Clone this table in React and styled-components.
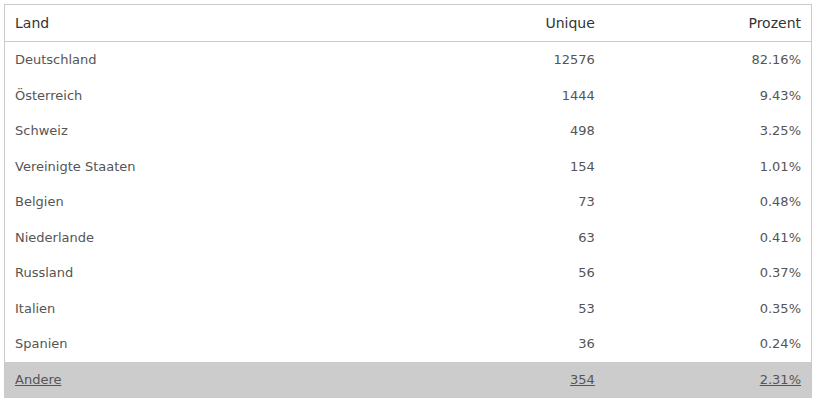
import React from "react";
import styled, { createGlobalStyle } from "styled-components";

const Global = createGlobalStyle`
  html, body { margin: 0; padding: 0; background: #fff; }
  body { padding: 4px; font-family: "DejaVu Sans", sans-serif; }
`;

const Table = styled.table`
  width: 808px;
  border-collapse: collapse;
  border: 1px solid #cacaca;
  table-layout: fixed;
`;

const Th = styled.th`
  font-weight: normal;
  font-size: 14px;
  color: #333;
  height: 36px;
  padding: 0 10px;
  text-align: ${(p) => (p.$right ? "right" : "left")};
  border-bottom: 1px solid #cacaca;
  width: ${(p) => p.$w};
`;

const Row = styled.tr`
  background: ${(p) => (p.$other ? "#cccccc" : "#fff")};
`;

const Td = styled.td`
  font-size: 13px;
  color: #555;
  height: 35.5px;
  padding: 0 10px;
  text-align: ${(p) => (p.$right ? "right" : "left")};
  text-decoration: ${(p) => (p.$u ? "underline" : "none")};
`;

const data = [
  ["Deutschland", "12576", "82.16%"],
  ["Österreich", "1444", "9.43%"],
  ["Schweiz", "498", "3.25%"],
  ["Vereinigte Staaten", "154", "1.01%"],
  ["Belgien", "73", "0.48%"],
  ["Niederlande", "63", "0.41%"],
  ["Russland", "56", "0.37%"],
  ["Italien", "53", "0.35%"],
  ["Spanien", "36", "0.24%"],
  ["Andere", "354", "2.31%"],
];

export default function App() {
  return (
    <>
      <Global />
      <Table>
        <thead>
          <tr>
            <Th $w="50%">Land</Th>
            <Th $w="25%" $right>Unique</Th>
            <Th $w="25%" $right>Prozent</Th>
          </tr>
        </thead>
        <tbody>
          {data.map((r, i) => {
            const other = i === data.length - 1;
            return (
              <Row key={r[0]} $other={other}>
                <Td $u={other}>{r[0]}</Td>
                <Td $right $u={other}>{r[1]}</Td>
                <Td $right $u={other}>{r[2]}</Td>
              </Row>
            );
          })}
        </tbody>
      </Table>
    </>
  );
}
